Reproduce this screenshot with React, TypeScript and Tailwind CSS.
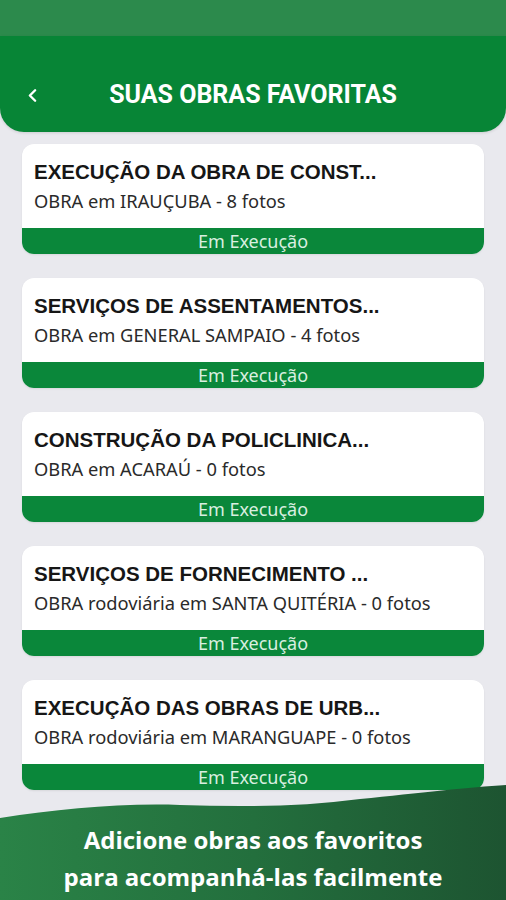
import { ChevronLeft } from 'lucide-react';

interface Obra {
    titulo: string;
    local: string;
    status: string;
}

const OBRAS: Obra[] = [
    { titulo: 'EXECUÇÃO DA OBRA DE CONST...', local: 'OBRA em IRAUÇUBA - 8 fotos', status: 'Em Execução' },
    { titulo: 'SERVIÇOS DE ASSENTAMENTOS...', local: 'OBRA em GENERAL SAMPAIO - 4 fotos', status: 'Em Execução' },
    { titulo: 'CONSTRUÇÃO DA POLICLINICA...', local: 'OBRA em ACARAÚ - 0 fotos', status: 'Em Execução' },
    { titulo: 'SERVIÇOS DE FORNECIMENTO ...', local: 'OBRA rodoviária em SANTA QUITÉRIA - 0 fotos', status: 'Em Execução' },
    { titulo: 'EXECUÇÃO DAS OBRAS DE URB...', local: 'OBRA rodoviária em MARANGUAPE - 0 fotos', status: 'Em Execução' },
];

function ObraCard({ obra }: { obra: Obra }) {
    return (
        <div className="rounded-xl bg-white overflow-hidden shadow-[0_1px_2px_rgba(0,0,0,0.08)]">
            <div className="h-[84px] px-3 pt-[14px]">
                <div className="text-[20.5px] leading-[28px] font-bold text-[#161616] font-['Liberation_Sans',sans-serif]">
                    {obra.titulo}
                </div>
                <div className="mt-[3px] text-[18.3px] leading-[24px] text-[#2a2a2a] font-['Noto_Sans',sans-serif]">
                    {obra.local}
                </div>
            </div>
            <div className="h-[26px] bg-[#0a873a] flex items-center justify-center text-[18px] text-[#d9efe0] font-['Noto_Sans',sans-serif]">
                {obra.status}
            </div>
        </div>
    );
}

export default function App() {
    return (
        <div className="relative w-full min-h-[900px] h-[900px] overflow-hidden bg-[#e9e9ee] flex flex-col">
            {/* Status bar */}
            <div className="h-9 bg-[#2c8a4c]"></div>

            {/* Header */}
            <div className="h-[96px] bg-[#078536] rounded-b-[24px] flex items-center relative shadow-[0_1px_3px_rgba(0,0,0,0.12)]">
                <ChevronLeft className="absolute left-[22px] top-[49px] w-[21px] h-[21px] text-white" strokeWidth={2.75} />
                <h1 className="w-full text-center pt-[22px] text-[25px] font-bold text-white font-['Roboto',sans-serif]">
                    SUAS OBRAS FAVORITAS
                </h1>
            </div>

            {/* List */}
            <div className="px-[22px] pt-3 flex flex-col gap-6">
                {OBRAS.map((obra, i) => (
                    <ObraCard key={i} obra={obra} />
                ))}
            </div>

            {/* Footer banner */}
            <div className="absolute left-0 right-0 bottom-0 h-[115px]">
                <svg className="absolute inset-0 w-full h-full" viewBox="0 0 506 115" preserveAspectRatio="none">
                    <defs>
                        <linearGradient id="fg" x1="0" y1="0" x2="1" y2="0">
                            <stop offset="0" stopColor="#2a8347" />
                            <stop offset="0.5" stopColor="#236f3d" />
                            <stop offset="1" stopColor="#1d5431" />
                        </linearGradient>
                    </defs>
                    <path d="M0 33 C 60 24, 120 18, 180 20 C 240 22, 300 22, 360 14 C 420 8, 470 2, 506 0 L506 115 L0 115 Z" fill="url(#fg)" />
                </svg>
                <div className="relative pt-[36px] text-center text-white font-bold text-[24px] leading-[37px] font-['Open_Sans',sans-serif]">
                    <div>Adicione obras aos favoritos</div>
                    <div>para acompanhá-las facilmente</div>
                </div>
            </div>
        </div>
    );
}
